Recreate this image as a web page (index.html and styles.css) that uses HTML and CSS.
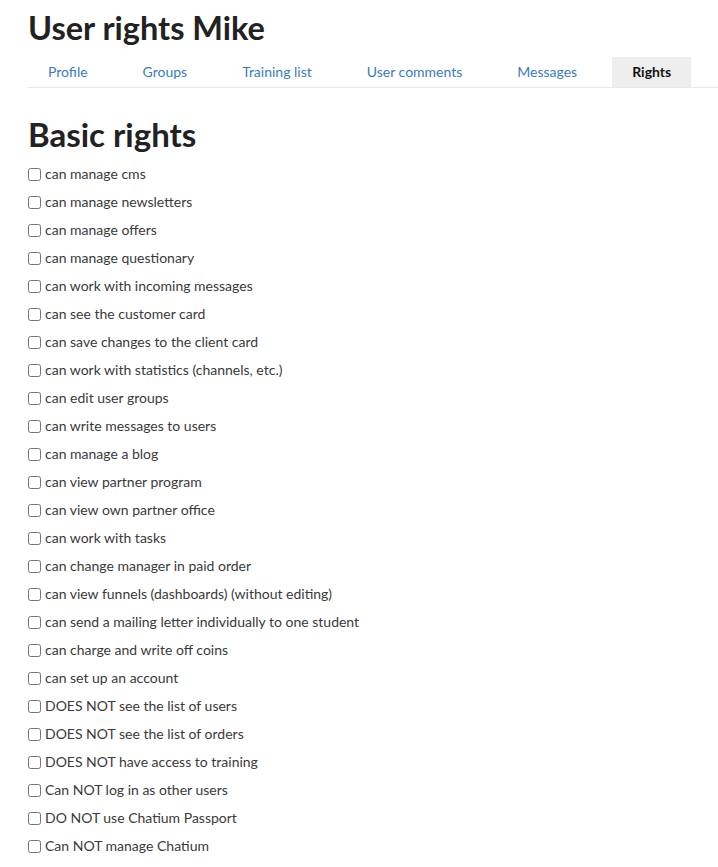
FILE: index.html
```html
<!DOCTYPE html>
<html lang="en">
	<head>
		<meta charset="UTF-8" />
		<title>User rights Mike</title>
		<link rel="stylesheet" href="styles.css">
	</head>
	<body>
		<div class="page">
			<h1>User rights Mike</h1>

			<ul class="tabs">
				<li><a href="#">Profile</a></li>
				<li><a href="#">Groups</a></li>
				<li><a href="#">Training list</a></li>
				<li><a href="#">User comments</a></li>
				<li><a href="#">Messages</a></li>
				<li class="active"><a href="#">Rights</a></li>
			</ul>

			<h2>Basic rights</h2>

			<ul class="rights">
				<li><label><input type="checkbox" /> can manage cms</label></li>
				<li><label><input type="checkbox" /> can manage newsletters</label></li>
				<li><label><input type="checkbox" /> can manage offers</label></li>
				<li><label><input type="checkbox" /> can manage questionary</label></li>
				<li><label><input type="checkbox" /> can work with incoming messages</label></li>
				<li><label><input type="checkbox" /> can see the customer card</label></li>
				<li><label><input type="checkbox" /> can save changes to the client card</label></li>
				<li><label><input type="checkbox" /> can work with statistics (channels, etc.)</label></li>
				<li><label><input type="checkbox" /> can edit user groups</label></li>
				<li><label><input type="checkbox" /> can write messages to users</label></li>
				<li><label><input type="checkbox" /> can manage a blog</label></li>
				<li><label><input type="checkbox" /> can view partner program</label></li>
				<li><label><input type="checkbox" /> can view own partner office</label></li>
				<li><label><input type="checkbox" /> can work with tasks</label></li>
				<li><label><input type="checkbox" /> can change manager in paid order</label></li>
				<li><label><input type="checkbox" /> can view funnels (dashboards) (without editing)</label></li>
				<li><label><input type="checkbox" /> can send a mailing letter individually to one student</label></li>
				<li><label><input type="checkbox" /> can charge and write off coins</label></li>
				<li><label><input type="checkbox" /> can set up an account</label></li>
				<li><label><input type="checkbox" /> DOES NOT see the list of users</label></li>
				<li><label><input type="checkbox" /> DOES NOT see the list of orders</label></li>
				<li><label><input type="checkbox" /> DOES NOT have access to training</label></li>
				<li><label><input type="checkbox" /> Can NOT log in as other users</label></li>
				<li><label><input type="checkbox" /> DO NOT use Chatium Passport</label></li>
				<li><label><input type="checkbox" /> Can NOT manage Chatium</label></li>
			</ul>
		</div>
	</body>
</html>
```

FILE: styles.css
```css
body {
	margin: 0;
	font-family: Lato, "Liberation Sans", sans-serif;
	font-size: 14px;
	color: #3a3a3a;
	background: #fff;
}

.page {
	padding: 9px 0 0 28px;
}

h1 {
	margin: 0;
	font-size: 32.5px;
	line-height: 38px;
	font-weight: bold;
	color: #222;
}

.tabs {
	display: flex;
	gap: 15px;
	list-style: none;
	margin: 10px 0 0;
	padding: 0;
	border-bottom: 1px solid #e8e8e8;
}

.tabs a {
	display: block;
	padding: 0 20px;
	line-height: 30px;
	color: #3a7bbf;
	text-decoration: none;
}

.tabs .active a {
	background: #eee;
	color: #111;
	font-weight: bold;
}

h2 {
	margin: 26px 0 0;
	font-size: 33px;
	line-height: 40px;
	font-weight: bold;
	color: #222;
}

.rights {
	list-style: none;
	margin: 11px 0 0;
	padding: 0;
}

.rights li {
	height: 28px;
}

.rights label {
	display: flex;
	align-items: center;
	gap: 4px;
	line-height: 18px;
}

.rights input {
	width: 13px;
	height: 13px;
	margin: 0;
}
```
